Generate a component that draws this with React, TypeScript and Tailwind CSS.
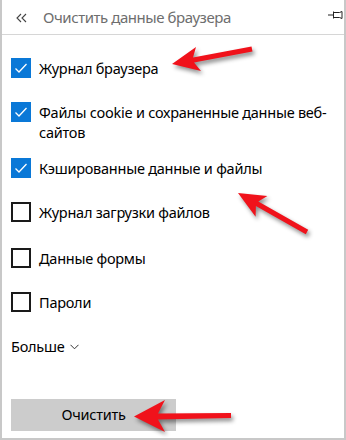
import { ReactNode } from "react";

const font = { fontFamily: '"Noto Sans", "Open Sans", sans-serif' };

const CheckBox = ({ checked }: { checked: boolean }) =>
  checked ? (
    <div className="w-5 h-5 shrink-0 bg-[#0a78d7] flex items-center justify-center">
      <svg width="20" height="20" viewBox="0 0 20 20" fill="none">
        <path d="M4.5 10.5l3.5 3.5 7.5-8" stroke="white" strokeWidth="1.3" />
      </svg>
    </div>
  ) : (
    <div className="w-5 h-5 shrink-0 border-2 border-[#1a1a1a] bg-white" />
  );

interface RowProps {
  checked: boolean;
  children: ReactNode;
  className?: string;
}

const Row = ({ checked, children, className }: RowProps) => (
  <div className={"flex items-start gap-2 " + (className ?? "")}>
    <CheckBox checked={checked} />
    <div className="text-[14.5px] tracking-[-0.25px] leading-5 text-black whitespace-nowrap">
      {children}
    </div>
  </div>
);

export default function App() {
  return (
    <div
      className="relative w-[346px] h-[440px] bg-white border-x-2 border-b-2 border-[#c8c8c8] overflow-hidden"
      style={font}
    >
      {/* header */}
      <div className="h-[35px] flex items-center border-b border-[#d6d6d6] pl-[14px] pr-0">
        <svg width="12" height="10" viewBox="0 0 12 10" fill="none" className="mt-[1px]">
          <path d="M5 1L1 5l4 4M10 1L6 5l4 4" stroke="#444" strokeWidth="1.1" />
        </svg>
        <span className="ml-[15px] text-[15px] tracking-[-0.45px] text-[#6e6e6e] leading-none">
          Очистить данные браузера
        </span>
        <svg width="16" height="11" viewBox="0 0 16 11" fill="none" className="ml-auto mb-[4px]">
          <path d="M0 5h5M5.5 1.5v7M5.5 2.5h6l2.5-1v7l-2.5-1h-6" stroke="#222" strokeWidth="1" />
        </svg>
      </div>

      {/* options */}
      <div className="flex flex-col pl-[9px] pt-[23px]">
        <Row checked>Журнал браузера</Row>
        <Row checked className="mt-[24px]">
          Файлы cookie и сохраненные данные веб-
          <br />
          сайтов
        </Row>
        <Row checked className="mt-[16px]">
          Кэшированные данные и файлы
        </Row>
        <Row checked={false} className="mt-[24px]">
          Журнал загрузки файлов
        </Row>
        <Row checked={false} className="mt-[26px]">
          Данные формы
        </Row>
        <Row checked={false} className="mt-[24px]">
          Пароли
        </Row>

        <div className="mt-[24px] flex items-center gap-[6px] text-[14.5px] tracking-[-0.25px] leading-5 text-black">
          Больше
          <svg width="9" height="6" viewBox="0 0 9 6" fill="none" className="mt-[2px]">
            <path d="M0.5 0.8l4 4 4-4" stroke="#333" strokeWidth="1" />
          </svg>
        </div>

        <button className="mt-[43px] w-[165px] h-[32px] bg-[#cccccc] text-[14.5px] tracking-[-0.25px] text-black">
          Очистить
        </button>
      </div>

      {/* red arrows */}
      <svg
        className="absolute left-[-2px] top-0 pointer-events-none"
        width="346"
        height="440"
        viewBox="0 0 346 440"
        style={{ filter: "drop-shadow(2px 3px 2px rgba(0,0,0,0.45))" }}
      >
        <polygon
          fill="#f0121b"
          points="172,64 196,47 193,57.5 251.5,46.5 252.5,51.5 194,62.5 201,71"
        />
        <polygon
          fill="#f0121b"
          points="238,193 267.4,195.9 258.3,201.6 308.2,229.8 305.8,234.2 255.9,206 255.6,216.7"
        />
        <polygon
          fill="#f0121b"
          points="134,416.5 165,400 158,413.5 231,413 231,418 158,419.5 165,432"
        />
      </svg>
    </div>
  );
}
